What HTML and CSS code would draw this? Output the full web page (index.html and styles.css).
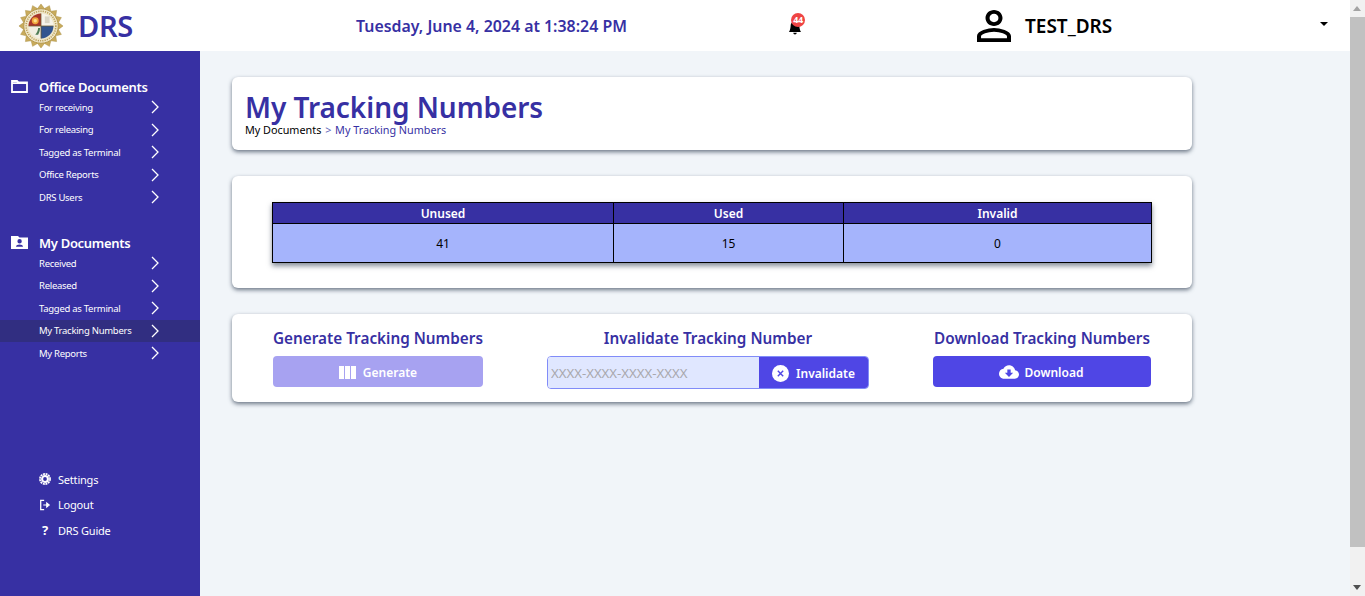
FILE: index.html
```html
<!DOCTYPE html>
<html lang="en">
<head>
  <meta charset="UTF-8">
  <meta name="viewport" content="width=device-width, initial-scale=1.0">
  <title>DRS - My Tracking Numbers</title>
  <link rel="stylesheet" href="styles.css">
</head>
<body>
  <div class="page">
    <!-- Top bar -->
    <header class="topbar">
      <div class="brand">
        <svg class="seal" viewBox="0 0 48 48" aria-hidden="true">
          <polygon fill="#c9ab5c" stroke="#a98f45" stroke-width=".5" points="47,24 42.15,27.61 45.25,32.8 39.38,34.28 40.26,40.26 34.28,39.38 32.8,45.25 27.61,42.15 24,47 20.39,42.15 15.2,45.25 13.72,39.38 7.74,40.26 8.62,34.28 2.75,32.8 5.85,27.61 1,24 5.85,20.39 2.75,15.2 8.62,13.72 7.74,7.74 13.72,8.62 15.2,2.75 20.39,5.85 24,1 27.61,5.85 32.8,2.75 34.28,8.62 40.26,7.74 39.38,13.72 45.25,15.2 42.15,20.39"/>
          <circle cx="24" cy="24" r="18" fill="#efe6c8" stroke="#b3964b" stroke-width="1"/>
          <circle cx="24" cy="24" r="15.5" fill="none" stroke="#b89c55" stroke-width="1.6" stroke-dasharray="1.2 1.2"/>
          <path d="M24 24V11A13 13 0 0 0 11 24Z" fill="#a8362a"/>
          <circle cx="18" cy="18.5" r="3.6" fill="#f0a63c"/>
          <circle cx="18" cy="18.5" r="1.8" fill="#fbe08a"/>
          <path d="M24 24V11A13 13 0 0 1 37 24Z" fill="#f6f3ea"/>
          <path d="M28 14h5v7h-5z" fill="#d9d4c4"/>
          <path d="M24 24H37A13 13 0 0 1 24 37Z" fill="#33558f"/>
          <path d="M24 24H11A13 13 0 0 0 24 37Z" fill="#f2efe2"/>
          <path d="M18 33c2-2 3-5 3-7h2c0 3-1 5-2 7Z" fill="#4f7d55"/>
          <path d="M24 11V37M11 24H37" stroke="#6b5a2c" stroke-width=".8"/>
        </svg>
        <span class="brand-name">DRS</span>
      </div>
      <div class="datetime">Tuesday, June 4, 2024 at 1:38:24 PM</div>
      <div class="bell">
        <svg class="bell-icon" viewBox="0 0 16 16" aria-hidden="true">
          <path d="M8 16a2 2 0 0 0 2-2H6a2 2 0 0 0 2 2zm.995-14.901a1 1 0 1 0-1.990 0A5.002 5.002 0 0 0 3 6c0 1.098-.5 6-2 7h14c-1.500-1-2-5.902-2-7 0-2.420-1.720-4.440-4.005-4.901z"/>
        </svg>
        <span class="badge">44</span>
      </div>
      <div class="user">
        <svg class="user-icon" viewBox="4 4 16 16" preserveAspectRatio="none" aria-hidden="true">
          <path d="M12 5.900c1.160 0 2.100.940 2.100 2.100s-.940 2.100-2.100 2.100S9.900 9.160 9.900 8s.940-2.100 2.100-2.100m0 9c2.970 0 6.100 1.460 6.100 2.100v1.100H5.900V17c0-.640 3.130-2.100 6.100-2.100M12 4C9.790 4 8 5.790 8 8s1.790 4 4 4 4-1.790 4-4-1.790-4-4-4zm0 9c-2.670 0-8 1.340-8 4v3h16v-3c0-2.660-5.330-4-8-4z"/>
        </svg>
        <span class="user-name">TEST_DRS</span>
      </div>
      <span class="caret"></span>
    </header>

    <div class="layout">
      <!-- Sidebar -->
      <nav class="sidebar">
        <div class="nav-group">
          <div class="nav-title">
            <svg class="nav-title-icon" viewBox="0 0 17 13" aria-hidden="true">
              <path d="M1 12V1h5l1.500 1.500H16V12Z M1 3.200H16" fill="none" stroke="#fff" stroke-width="1.800"/>
            </svg>
            Office Documents
          </div>
          <a class="nav-item">For receiving<svg class="chevron" viewBox="0 0 8 14"><path d="M1 1l6 6-6 6"/></svg></a>
          <a class="nav-item">For releasing<svg class="chevron" viewBox="0 0 8 14"><path d="M1 1l6 6-6 6"/></svg></a>
          <a class="nav-item">Tagged as Terminal<svg class="chevron" viewBox="0 0 8 14"><path d="M1 1l6 6-6 6"/></svg></a>
          <a class="nav-item">Office Reports<svg class="chevron" viewBox="0 0 8 14"><path d="M1 1l6 6-6 6"/></svg></a>
          <a class="nav-item">DRS Users<svg class="chevron" viewBox="0 0 8 14"><path d="M1 1l6 6-6 6"/></svg></a>
        </div>
        <div class="nav-group">
          <div class="nav-title">
            <svg class="nav-title-icon" viewBox="0 0 17 13" aria-hidden="true">
              <path fill="#fff" fill-rule="evenodd" d="M0 0h7l1.500 1.500H17V13H0ZM10.800 5.300a2.200 2.200 0 1 1-4.400 0a2.200 2.200 0 0 1 4.400 0ZM5 10.800c0-1.500 1.700-2.300 3.500-2.300s3.500.8 3.500 2.300Z"/>
            </svg>
            My Documents
          </div>
          <a class="nav-item">Received<svg class="chevron" viewBox="0 0 8 14"><path d="M1 1l6 6-6 6"/></svg></a>
          <a class="nav-item">Released<svg class="chevron" viewBox="0 0 8 14"><path d="M1 1l6 6-6 6"/></svg></a>
          <a class="nav-item">Tagged as Terminal<svg class="chevron" viewBox="0 0 8 14"><path d="M1 1l6 6-6 6"/></svg></a>
          <a class="nav-item active">My Tracking Numbers<svg class="chevron" viewBox="0 0 8 14"><path d="M1 1l6 6-6 6"/></svg></a>
          <a class="nav-item">My Reports<svg class="chevron" viewBox="0 0 8 14"><path d="M1 1l6 6-6 6"/></svg></a>
        </div>
        <div class="nav-bottom">
          <a class="bottom-item">
            <svg class="bottom-icon" viewBox="0 0 14 14" aria-hidden="true">
              <circle cx="7" cy="7" r="5.900" fill="none" stroke="#fff" stroke-width="2" stroke-dasharray="2.300 .790"/>
              <circle cx="7" cy="7" r="3.400" fill="none" stroke="#fff" stroke-width="2.400"/>
            </svg>
            Settings
          </a>
          <a class="bottom-item">
            <svg class="bottom-icon" viewBox="0 0 14 14" aria-hidden="true">
              <path d="M6 1.500H2V12.500H6" fill="none" stroke="#fff" stroke-width="1.500"/>
              <path d="M5 7H10M9 4.500L12 7 9 9.500Z" fill="#fff" stroke="#fff" stroke-width="1.200"/>
            </svg>
            Logout
          </a>
          <a class="bottom-item">
            <span class="bottom-icon help">?</span>
            DRS Guide
          </a>
        </div>
      </nav>

      <!-- Main content -->
      <main class="content">
        <section class="card title-card">
          <h1>My Tracking Numbers</h1>
          <div class="crumbs"><span class="crumb-root">My Documents</span> <span class="crumb-sep">&gt;</span> My Tracking Numbers</div>
        </section>

        <section class="card table-card">
          <table class="counts">
            <thead>
              <tr><th class="col-unused">Unused</th><th class="col-used">Used</th><th>Invalid</th></tr>
            </thead>
            <tbody>
              <tr><td>41</td><td>15</td><td>0</td></tr>
            </tbody>
          </table>
        </section>

        <section class="card actions-card">
          <div class="action action-generate">
            <h2>Generate Tracking Numbers</h2>
            <button class="btn btn-disabled">
              <svg class="btn-icon" viewBox="0 0 17 13" aria-hidden="true"><path fill="#fff" d="M0 0h5v13H0zM6 0h5v13H6zM12 0h5v13h-5z"/></svg>
              Generate
            </button>
          </div>
          <div class="action action-invalidate">
            <h2>Invalidate Tracking Number</h2>
            <div class="input-group">
              <input class="tracking-input" type="text" placeholder="XXXX-XXXX-XXXX-XXXX">
              <button class="btn btn-attached">
                <svg class="btn-icon" viewBox="0 0 17 17" aria-hidden="true">
                  <circle cx="8.500" cy="8.500" r="8.500" fill="#fff"/>
                  <path d="M5.800 5.800l5.400 5.400M11.200 5.800l-5.400 5.400" stroke="#4f46e5" stroke-width="1.400"/>
                </svg>
                Invalidate
              </button>
            </div>
          </div>
          <div class="action action-download">
            <h2>Download Tracking Numbers</h2>
            <button class="btn btn-download">
              <svg class="btn-icon cloud" viewBox="0 0 24 16" aria-hidden="true">
                <path fill="#fff" d="M19.350 6.040C18.670 2.590 15.640 0 12 0 9.110 0 6.600 1.640 5.350 4.040 2.340 4.360 0 6.910 0 10c0 3.310 2.690 6 6 6h13c2.760 0 5-2.240 5-5 0-2.640-2.050-4.780-4.650-4.960zM17 9l-5 5-5-5h3V5h4v4h3z"/>
              </svg>
              Download
            </button>
          </div>
        </section>
      </main>
    </div>
  </div>

  <!-- Window scrollbar as seen in the screenshot -->
  <div class="scrollbar" aria-hidden="true">
    <span class="arrow arrow-up"></span>
    <div class="track"><div class="thumb"></div></div>
    <span class="arrow arrow-down"></span>
  </div>
</body>
</html>
```

FILE: styles.css
```css
* {
  box-sizing: border-box;
}
html, body {
  height: 100%;
}
body {
  margin: 0;
  display: flex;
  overflow: hidden;
  font-family: "Noto Sans", "Open Sans", Arial, sans-serif;
  background-color: #f1f5f9;
  color: #000;
}
.page {
  flex: 1;
  min-width: 0;
  display: flex;
  flex-direction: column;
}

/* top bar */
.topbar {
  height: 51px;
  flex: none;
  display: flex;
  align-items: center;
  background: #fff;
  position: relative;
}
.brand {
  width: 356px;
  flex: none;
  display: flex;
  align-items: center;
  padding-left: 18px;
}
.seal {
  width: 46px;
  height: 46px;
}
.brand-name {
  margin-left: 14px;
  font-size: 29px;
  font-weight: 600;
  color: #3730a3;
  letter-spacing: -0.3px;
}
.datetime {
  width: 425px;
  flex: none;
  font-size: 15.9px;
  font-weight: 600;
  color: #3730a3;
}
.bell {
  width: 196px;
  flex: none;
  position: relative;
  height: 30px;
}
.bell-icon {
  position: absolute;
  left: 7px;
  top: 9px;
  width: 14px;
  height: 15px;
}
.badge {
  position: absolute;
  left: 10px;
  top: 2px;
  width: 14px;
  height: 14px;
  border-radius: 50%;
  background: #ef4444;
  color: #fff;
  font-size: 9px;
  font-weight: 700;
  line-height: 14px;
  text-align: center;
  letter-spacing: -0.5px;
}
.user {
  display: flex;
  align-items: center;
  gap: 14px;
}
.user-icon {
  width: 34px;
  height: 32px;
}
.user-name {
  font-size: 19px;
  font-weight: 600;
}
.caret {
  position: absolute;
  left: 1320px;
  top: 22px;
  border-top: 4px solid #000;
  border-left: 4px solid transparent;
  border-right: 4px solid transparent;
}

.layout {
  flex: 1;
  display: flex;
  min-height: 0;
}

/* sidebar */
.sidebar {
  width: 200px;
  flex: none;
  display: flex;
  flex-direction: column;
  padding-top: 26px;
  background: #3730a3;
  color: #fff;
}
.nav-group {
  margin-bottom: 24.5px;
}
.nav-title {
  display: flex;
  align-items: center;
  height: 20px;
  margin-bottom: -1px;
  padding-left: 11px;
  font-size: 13px;
  font-weight: 600;
  letter-spacing: -0.3px;
}
.nav-title-icon {
  width: 17px;
  height: 13px;
  margin-right: 11px;
  margin-top: -2px;
}
.nav-item {
  display: flex;
  align-items: center;
  justify-content: space-between;
  height: 22.5px;
  padding: 0 41px 0 39px;
  font-size: 9.5px;
  letter-spacing: -0.28px;
}
.nav-item.active {
  background: #312e81;
}
.chevron {
  width: 8px;
  height: 14px;
  fill: none;
  stroke: #fff;
  stroke-width: 1.3;
}
.nav-bottom {
  margin-top: auto;
  padding: 0 0 53px 39px;
}
.bottom-item {
  display: flex;
  align-items: center;
  height: 25.5px;
  font-size: 11px;
  letter-spacing: -0.2px;
}
.bottom-icon {
  width: 12px;
  height: 12px;
  margin-right: 7px;
  flex: none;
}
.help {
  font-size: 13px;
  font-weight: 700;
  line-height: 12px;
  text-align: center;
}

/* content */
.content {
  flex: 1;
  min-width: 0;
  padding: 26px 0 0 32px;
  display: flex;
  flex-direction: column;
  gap: 26px;
}
.card {
  width: 960px;
  background: #fff;
  border-radius: 6px;
  box-shadow: 0 2px 4px rgba(51, 65, 85, 0.7);
}
.title-card {
  height: 73px;
  padding: 14px 13px 0;
}
h1 {
  margin: 0;
  font-size: 28px;
  line-height: 33px;
  font-weight: 600;
  color: #3730a3;
  letter-spacing: -0.05px;
}
.crumbs {
  font-size: 10.8px;
  line-height: 12px;
  color: #3730a3;
}
.crumb-root {
  color: #000;
}
.crumb-sep {
  margin: 0 1px;
  color: #6366b8;
}
.table-card {
  height: 112px;
  padding: 26px 40px 0;
}
.counts {
  width: 880px;
  border-collapse: collapse;
  table-layout: fixed;
  box-shadow: 0 3px 5px rgba(51, 65, 85, 0.6);
  font-size: 12px;
}
.counts th {
  height: 21px;
  padding: 0;
  border: 1px solid #000;
  background: #3730a3;
  color: #fff;
  font-size: 12px;
  font-weight: 600;
}
.counts td {
  height: 39px;
  padding: 0;
  border: 1px solid #000;
  background: #a5b4fc;
  text-align: center;
}
.col-unused {
  width: 341px;
}
.col-used {
  width: 230px;
}
.actions-card {
  height: 88px;
  display: flex;
  padding: 14px 0 0 41px;
}
.action {
  display: flex;
  flex-direction: column;
  align-items: center;
}
.action-generate {
  width: 210px;
  margin-right: 64px;
}
.action-invalidate {
  width: 322px;
  margin-right: 64px;
}
.action-download {
  width: 218px;
}
h2 {
  margin: 0 0 7px;
  font-size: 15.3px;
  line-height: 21px;
  font-weight: 600;
  color: #3730a3;
  white-space: nowrap;
}
.btn {
  width: 100%;
  height: 31px;
  display: flex;
  align-items: center;
  justify-content: center;
  gap: 7px;
  padding: 1px 0 0;
  border: none;
  border-radius: 4px;
  background: #4f46e5;
  color: #fff;
  font-family: inherit;
  font-size: 12px;
  font-weight: 600;
}
.btn-disabled {
  background: #a7a2f1;
}
.btn-download {
  gap: 6px;
  padding-right: 2px;
}
.btn-icon {
  width: 17px;
  height: 17px;
  flex: none;
}
.action-generate .btn-icon {
  height: 13px;
}
.cloud {
  width: 20px;
  height: 14px;
}
.input-group {
  width: 100%;
  height: 33px;
  display: flex;
  border: 1px solid #818cf8;
  border-radius: 4px;
  overflow: hidden;
}
.tracking-input {
  flex: 1;
  min-width: 0;
  padding: 0 3px;
  border: none;
  background: #e0e7ff;
  font-family: inherit;
  font-size: 13.2px;
}
.tracking-input::placeholder {
  color: #a8a8ad;
}
.btn-attached {
  width: 109px;
  height: 100%;
  flex: none;
  border-radius: 0;
}

/* window scrollbar */
.scrollbar {
  width: 15px;
  flex: none;
  display: flex;
  flex-direction: column;
  align-items: center;
  background: #f1f1f1;
}
.arrow {
  width: 15px;
  height: 17px;
  flex: none;
  position: relative;
}
.arrow::after {
  content: "";
  position: absolute;
  left: 3px;
  border-left: 4.5px solid transparent;
  border-right: 4.5px solid transparent;
}
.arrow-up::after {
  top: 6px;
  border-bottom: 5px solid #a3a3a3;
}
.arrow-down::after {
  top: 6px;
  border-top: 5px solid #505050;
}
.track {
  flex: 1;
  width: 15px;
  padding-bottom: 32px;
}
.thumb {
  height: 100%;
  background: #c1c1c1;
}
```
